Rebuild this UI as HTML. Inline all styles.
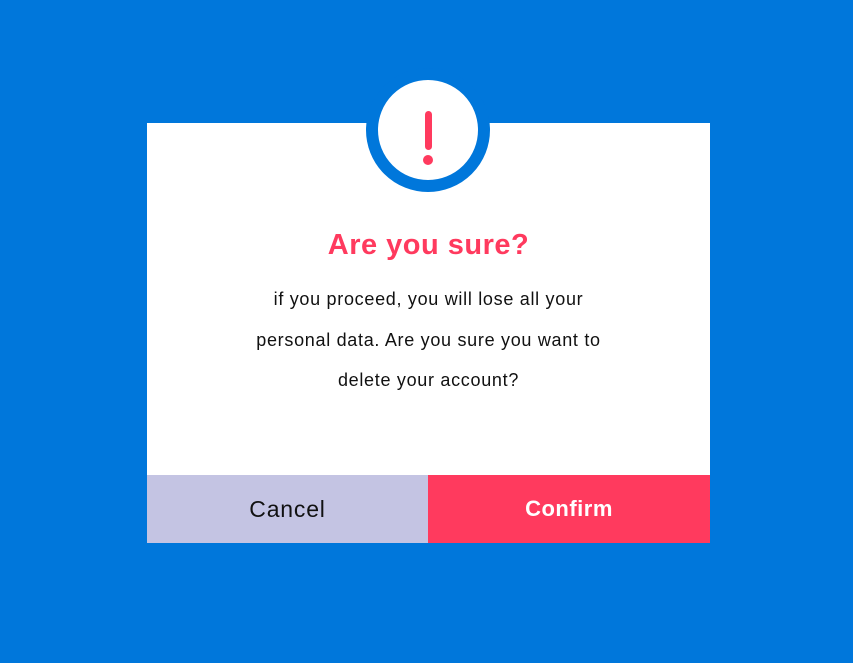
<!DOCTYPE html>
<html><head><style>
body{margin:0;width:853px;height:663px;background:#0077db;position:relative;overflow:hidden;font-family:"Liberation Sans",sans-serif}
.card{position:absolute;left:147px;top:123px;width:563px;height:420px;background:#fff}
.ring{position:absolute;left:366px;top:68px;width:100px;height:100px;border:12px solid #0077db;border-radius:50%;background:#fff}
.bar{position:absolute;left:424.5px;top:111px;width:7px;height:39px;border-radius:4px;background:#ff3a5e}
.dot{position:absolute;left:423px;top:155px;width:10px;height:10px;border-radius:50%;background:#ff3a5e}
.t{position:absolute;left:147px;width:563px;text-align:center;white-space:nowrap}
h1{margin:0;font-size:29px;font-weight:bold;color:#ff3a5e;top:229px;letter-spacing:0.5px}
.p{font-size:18px;color:#111;letter-spacing:0.7px}
.b{position:absolute;top:475px;height:68px;line-height:68px;text-align:center;font-size:23px;letter-spacing:0.8px}
</style></head><body>
<div class="card"></div>
<div class="ring"></div>
<div class="bar"></div><div class="dot"></div>
<h1 class="t">Are you sure?</h1>
<div class="t p" style="top:289px">if you proceed, you will lose all your</div>
<div class="t p" style="top:330px">personal data. Are you sure you want to</div>
<div class="t p" style="top:370px">delete your account?</div>
<div class="b" style="left:147px;width:281px;background:#c4c4e3;color:#111">Cancel</div>
<div class="b" style="left:428px;width:282px;background:#ff3a5e;color:#fff;font-weight:bold;font-size:22px;letter-spacing:0.5px">Confirm</div>
</body></html>
